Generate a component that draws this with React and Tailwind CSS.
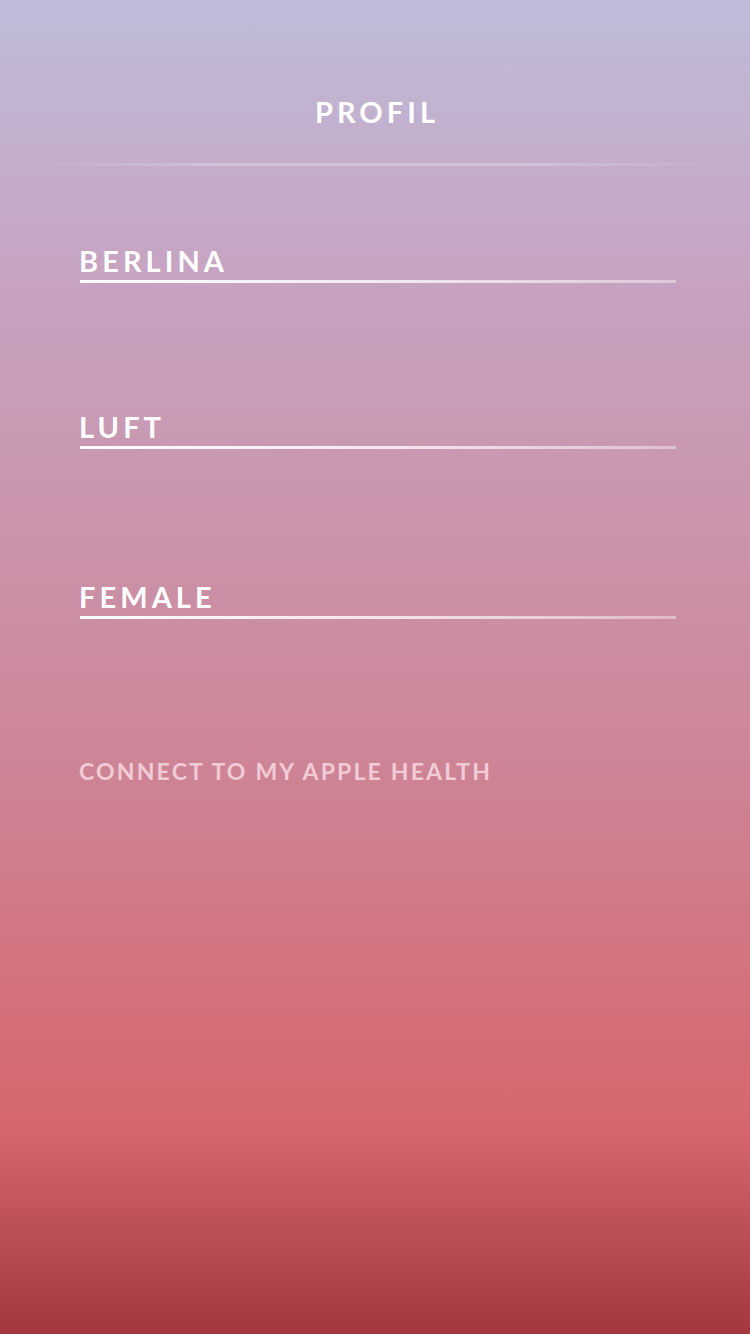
export default function App() {
  const fields = [
    { label: 'BERLINA', mt: 'mt-0' },
    { label: 'LUFT', mt: 'mt-[129px]' },
    { label: 'FEMALE', mt: 'mt-[133px]' },
  ];

  return (
    <div
      className="w-[750px] h-[1334px] flex flex-col bg-[linear-gradient(180deg,#bfbcd9_0%,#c7a2c0_22%,#cd8799_55%,#d6656d_85%,#a2373f_100%)]"
      style={{ fontFamily: 'Lato, "Open Sans", sans-serif' }}
    >
      {/* Header */}
      <div className="pt-[97px] flex justify-center">
        <h1 className="text-[29px] leading-[29px] font-bold tracking-[0.14em] text-white pl-[0.14em]">PROFIL</h1>
      </div>
      <div className="mt-[37px] mx-[20px] h-[3px] bg-[linear-gradient(90deg,rgba(255,255,255,0)_0%,rgba(255,255,255,0.25)_30%,rgba(255,255,255,0.25)_70%,rgba(255,255,255,0)_100%)]" />

      {/* Fields */}
      <div className="flex flex-col px-[80px] pt-[80px]">
        {fields.map((f) => (
          <div key={f.label} className={`flex flex-col ${f.mt}`}>
            <span className="text-[29px] leading-[29px] font-bold tracking-[0.14em] text-white -ml-[1px]">{f.label}</span>
            <div className="mt-[5px] h-[3px] w-[596px] bg-[linear-gradient(90deg,#ffffff_0%,rgba(255,255,255,0.75)_55%,rgba(255,255,255,0.4)_100%)]" />
          </div>
        ))}
      </div>

      <div className="px-[79px] mt-[141px]">
        <span className="text-[23px] leading-[23px] font-bold tracking-[0.095em] text-[#f1cbd6]">
          CONNECT TO MY APPLE HEALTH
        </span>
      </div>
    </div>
  );
}
